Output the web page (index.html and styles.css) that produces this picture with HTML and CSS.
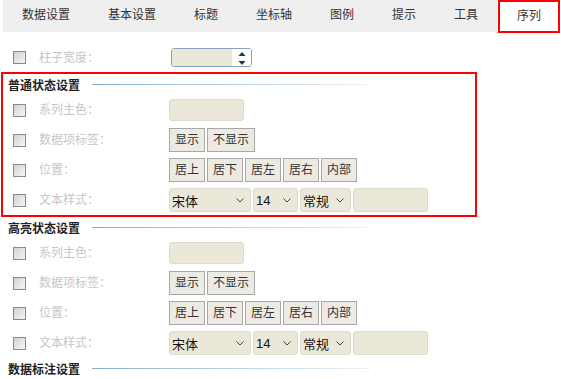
FILE: index.html
```html
<!DOCTYPE html>
<html>
<head>
<meta http-equiv="Content-Type" content="text/html; charset=utf-8" />
<title>序列</title>
<link rel="stylesheet" href="styles.css">
</head>
<body>

<div class="page">

	<ul class="tabs">
		<li class="tab">数据设置</li>
		<li class="tab">基本设置</li>
		<li class="tab">标题</li>
		<li class="tab">坐标轴</li>
		<li class="tab">图例</li>
		<li class="tab">提示</li>
		<li class="tab">工具</li>
		<li class="tab active">序列</li>
	</ul>

	<div class="row row-top">
		<span class="check"></span>
		<span class="label">柱子宽度：</span>
		<div class="spin">
			<span class="spin-field"></span>
			<span class="spin-btns">
				<svg width="8" height="16" viewBox="0 0 8 16"><path d="M4 2 L7.5 6 L0.5 6 Z" fill="#1f3552"/><path d="M0.5 11 L7.5 11 L4 15 Z" fill="#1f3552"/></svg>
			</span>
		</div>
	</div>

	<div class="section marked">
		<div class="sec-title"><span>普通状态设置</span><i class="rule"></i></div>

		<div class="row">
			<span class="check"></span>
			<span class="label">系列主色：</span>
			<span class="field"></span>
		</div>

		<div class="row">
			<span class="check"></span>
			<span class="label">数据项标签：</span>
			<div class="btns">
				<span class="btn">显示</span>
				<span class="btn">不显示</span>
			</div>
		</div>

		<div class="row">
			<span class="check"></span>
			<span class="label">位置：</span>
			<div class="btns">
				<span class="btn">居上</span>
				<span class="btn">居下</span>
				<span class="btn">居左</span>
				<span class="btn">居右</span>
				<span class="btn">内部</span>
			</div>
		</div>

		<div class="row">
			<span class="check"></span>
			<span class="label">文本样式：</span>
			<div class="selects">
				<span class="sel sel-font">宋体<svg width="8" height="5" viewBox="0 0 8 5"><path d="M0.5 0.5 L4 4 L7.5 0.5" fill="none" stroke="#444" stroke-width="1"/></svg></span>
				<span class="sel sel-size">14<svg width="8" height="5" viewBox="0 0 8 5"><path d="M0.5 0.5 L4 4 L7.5 0.5" fill="none" stroke="#444" stroke-width="1"/></svg></span>
				<span class="sel sel-weight">常规<svg width="8" height="5" viewBox="0 0 8 5"><path d="M0.5 0.5 L4 4 L7.5 0.5" fill="none" stroke="#444" stroke-width="1"/></svg></span>
				<span class="field field-color"></span>
			</div>
		</div>
	</div>

	<div class="section">
		<div class="sec-title"><span>高亮状态设置</span><i class="rule"></i></div>

		<div class="row">
			<span class="check"></span>
			<span class="label">系列主色：</span>
			<span class="field"></span>
		</div>

		<div class="row">
			<span class="check"></span>
			<span class="label">数据项标签：</span>
			<div class="btns">
				<span class="btn">显示</span>
				<span class="btn">不显示</span>
			</div>
		</div>

		<div class="row">
			<span class="check"></span>
			<span class="label">位置：</span>
			<div class="btns">
				<span class="btn">居上</span>
				<span class="btn">居下</span>
				<span class="btn">居左</span>
				<span class="btn">居右</span>
				<span class="btn">内部</span>
			</div>
		</div>

		<div class="row">
			<span class="check"></span>
			<span class="label">文本样式：</span>
			<div class="selects">
				<span class="sel sel-font">宋体<svg width="8" height="5" viewBox="0 0 8 5"><path d="M0.5 0.5 L4 4 L7.5 0.5" fill="none" stroke="#444" stroke-width="1"/></svg></span>
				<span class="sel sel-size">14<svg width="8" height="5" viewBox="0 0 8 5"><path d="M0.5 0.5 L4 4 L7.5 0.5" fill="none" stroke="#444" stroke-width="1"/></svg></span>
				<span class="sel sel-weight">常规<svg width="8" height="5" viewBox="0 0 8 5"><path d="M0.5 0.5 L4 4 L7.5 0.5" fill="none" stroke="#444" stroke-width="1"/></svg></span>
				<span class="field field-color"></span>
			</div>
		</div>
	</div>

	<div class="section">
		<div class="sec-title"><span>数据标注设置</span><i class="rule"></i></div>
	</div>

</div>

</body>
</html>
```

FILE: styles.css
```css
html, body {
	margin: 0;
	padding: 0;
	background: white;
}

.page {
	padding-left: 3px;
	font-family: "Liberation Sans", "Noto Sans CJK SC", sans-serif;
	font-size: 12px;
	color: #333;
	overflow: hidden;
}

/* tabs */
.tabs {
	display: flex;
	align-items: flex-start;
	list-style: none;
	margin: 0;
	padding: 0;
	height: 32px;
}

.tab {
	height: 32px;
	line-height: 31px;
	padding: 0 19px;
	background: #efefef;
	white-space: nowrap;
}

.tab.active {
	box-sizing: border-box;
	height: 33px;
	width: 62px;
	margin-left: 1px;
	padding: 0 0 0 17px;
	line-height: 29px;
	background: white;
	border: 2px solid #f00;
}

/* rows */
.row {
	display: flex;
	align-items: center;
	height: 30px;
	padding-left: 10px;
}

.row-top {
	height: 29px;
	margin-top: 11px;
}

.check {
	box-sizing: border-box;
	width: 13px;
	height: 13px;
	border: 1px solid #8a8a8a;
	background: linear-gradient(135deg, #d2d2d2, #f6f6f6);
	margin-right: 13px;
	flex: none;
}

.label {
	width: 130px;
	color: #c6c6c6;
	line-height: 16px;
	flex: none;
}

/* number spinner */
.spin {
	box-sizing: border-box;
	display: flex;
	width: 81px;
	height: 19px;
	margin-left: 2px;
	border: 1px solid #8aa2bd;
	border-radius: 3px;
	overflow: hidden;
}

.spin-field {
	flex: 1;
	background: #ebe8d9;
}

.spin-btns {
	display: flex;
	align-items: center;
	justify-content: center;
	width: 19px;
	background: white;
}

/* sections */
.section {
	box-sizing: border-box;
}

.marked {
	width: 476px;
	margin-left: -2px;
	border: 2px solid #f00;
	padding-left: 0;
}

.marked .sec-title,
.marked .row {
	margin-left: 0;
}

.marked .sec-title {
	padding-left: 5px;
}

.marked .row {
	padding-left: 10px;
}

.sec-title {
	display: flex;
	align-items: center;
	height: 21px;
	padding-left: 5px;
	font-weight: bold;
	color: #222;
}

.rule {
	display: block;
	width: 278px;
	height: 1px;
	margin-left: 12px;
	background: linear-gradient(to right, #86aed0, #eaf2f9);
}

/* controls */
.field {
	box-sizing: border-box;
	width: 75px;
	height: 22px;
	background: #ebe8da;
	border: 1px solid #dcdad0;
	border-radius: 3px;
}

.btns {
	display: flex;
	gap: 2px;
}

.btn {
	box-sizing: border-box;
	height: 24px;
	line-height: 22px;
	padding: 0 5px;
	border: 1px solid #a8a8a8;
	background: #eceae3;
	color: #333;
}

.selects {
	display: flex;
	gap: 2px;
}

.sel {
	box-sizing: border-box;
	display: flex;
	align-items: center;
	justify-content: space-between;
	height: 24px;
	padding: 0 6px 0 2px;
	background: #ebe8da;
	border: 1px solid #dcdad0;
	border-radius: 3px;
	color: #111;
	font-size: 13px;
}

.sel-font {
	width: 82px;
}

.sel-size {
	width: 45px;
}

.sel-weight {
	width: 51px;
}

.field-color {
	height: 24px;
	width: 75px;
}
```
